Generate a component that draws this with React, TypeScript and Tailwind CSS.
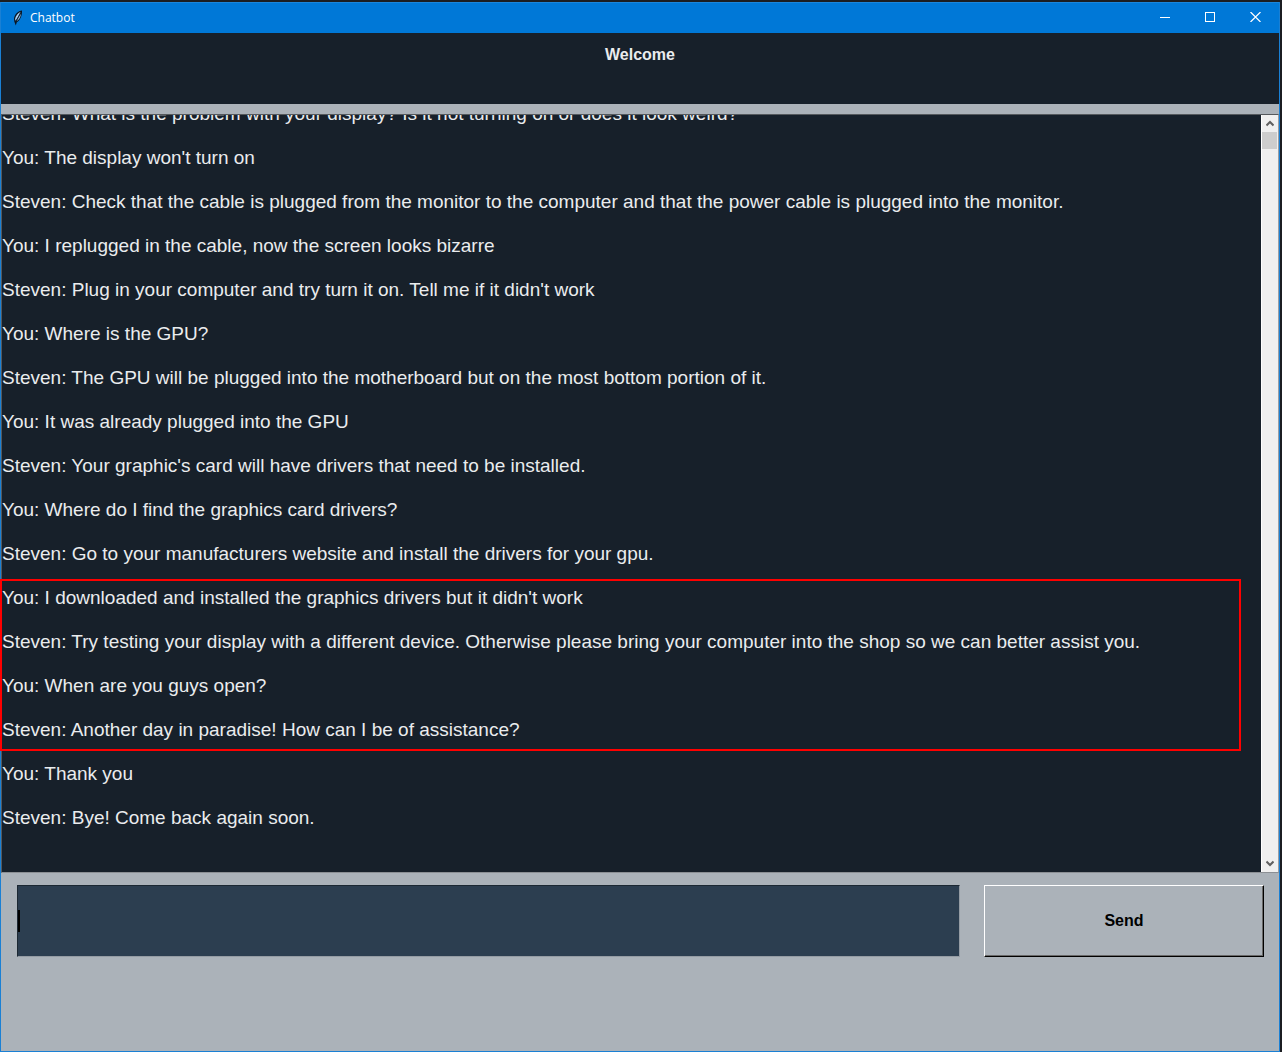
import { useState } from "react";

const beforeHighlight = [
  "Steven: What is the problem with your display? Is it not turning on or does it look weird?",
  "You: The display won't turn on",
  "Steven: Check that the cable is plugged from the monitor to the computer and that the power cable is plugged into the monitor.",
  "You: I replugged in the cable, now the screen looks bizarre",
  "Steven: Plug in your computer and try turn it on. Tell me if it didn't work",
  "You: Where is the GPU?",
  "Steven: The GPU will be plugged into the motherboard but on the most bottom portion of it.",
  "You: It was already plugged into the GPU",
  "Steven: Your graphic's card will have drivers that need to be installed.",
  "You: Where do I find the graphics card drivers?",
  "Steven: Go to your manufacturers website and install the drivers for your gpu.",
];
const highlighted = [
  "You: I downloaded and installed the graphics drivers but it didn't work",
  "Steven: Try testing your display with a different device. Otherwise please bring your computer into the shop so we can better assist you.",
  "You: When are you guys open?",
  "Steven: Another day in paradise! How can I be of assistance?",
];
const afterHighlight = ["You: Thank you", "Steven: Bye! Come back again soon."];

function Messages({ items }: { items: string[] }) {
  return (
    <>
      {items.map((text) => (
        <p key={text} className="shrink-0">
          {text}
        </p>
      ))}
    </>
  );
}

function Feather() {
  return (
    <svg viewBox="0 0 16 16" className="size-4" aria-hidden="true">
      <path d="M13 0.500C9.500 0.800 5.600 4 5 8.500L5.300 11.500 6.800 15.500 7.800 12.200C11 10.500 13.200 6 13 0.500Z" fill="#0a1420" />
      <path d="M11.800 1.800C8.800 3 6.600 6 6.100 9L6.500 10.800 9.200 6.500Z" fill="#a9d0f2" />
      <path d="M11.900 3.500 7.500 11.300C10 9.800 11.900 7 11.900 3.500Z" fill="#8ab6dd" />
      <path d="M11.800 2 6.700 12" stroke="#15263a" strokeWidth="0.600" fill="none" />
    </svg>
  );
}

function TitleBar() {
  return (
    <div className="flex h-[31px] shrink-0 items-center border-t border-[#1a86dc] bg-[#0078d7] text-white">
      <div className="flex flex-1 items-center gap-[5px] pl-2">
        <Feather />
        <span className="font-['Open_Sans',sans-serif] text-xs">Chatbot</span>
      </div>
      <div className="flex h-full pb-0.5">
        <button aria-label="Minimize" className="flex h-full w-[45px] items-center justify-center">
          <svg width="10" height="10" shapeRendering="crispEdges"><path d="M0 5.500H10" stroke="white" /></svg>
        </button>
        <button aria-label="Maximize" className="flex h-full w-[45px] items-center justify-center">
          <svg width="10" height="10" shapeRendering="crispEdges"><path d="M.5.5H9.500V9.500H.5Z" stroke="white" fill="none" /></svg>
        </button>
        <button aria-label="Close" className="flex h-full w-[47px] items-center justify-center">
          <svg width="11" height="10"><path d="M.5 0 10.500 10M10.500 0 .5 10" stroke="white" strokeWidth="1.200" /></svg>
        </button>
      </div>
    </div>
  );
}

function Scrollbar() {
  return (
    <div className="flex w-[17px] shrink-0 flex-col border-l border-white bg-[#f0f0f0]">
      <button aria-label="Scroll up" className="flex h-[17px] items-center justify-center">
        <svg width="8" height="7"><path d="M.5 5.500 4 2 7.500 5.500" stroke="#606060" strokeWidth="2" fill="none" /></svg>
      </button>
      <div className="h-[17px] w-[15px] bg-[#cdcdcd]" />
      <div className="flex-1" />
      <button aria-label="Scroll down" className="flex h-[17px] items-center justify-center">
        <svg width="8" height="7"><path d="M.5 1.500 4 5 7.500 1.500" stroke="#606060" strokeWidth="2" fill="none" /></svg>
      </button>
    </div>
  );
}

export default function App() {
  const [message, setMessage] = useState("");
  return (
    <div className="h-screen bg-[#1b1d21] pt-[2px] pr-[2px] font-['Liberation_Sans',Arial,sans-serif]">
      <div className="flex h-full flex-col border-x border-b border-[#1a80d4] bg-[#abb2b9]">
        <TitleBar />
        <header className="h-[71px] shrink-0 bg-[#17202a] pt-3 text-center">
          <h1 className="text-base leading-5 font-bold text-[#eaecee]">Welcome</h1>
        </header>
        <div className="h-[10px] shrink-0" />
        <main className="flex min-h-0 flex-1 border border-t-[#55595d] border-r-[#9a9fa5] border-b-[#8b8f94] border-l-[#55595d]">
          <div className="flex min-w-0 flex-1 flex-col justify-end gap-[22px] overflow-y-clip bg-[#17202a] pb-[43px] text-[19px] leading-[22px] text-[#eaecee]">
            <Messages items={beforeHighlight} />
            <section className="relative flex shrink-0 flex-col gap-[22px]">
              <Messages items={highlighted} />
              <div className="pointer-events-none absolute -top-2 right-5 -bottom-2.5 -left-0.5 border-2 border-[#ff0000]" />
            </section>
            <Messages items={afterHighlight} />
          </div>
          <Scrollbar />
        </main>
        <form
          className="flex h-[178px] shrink-0 items-start gap-6 pt-3 pr-[15px] pl-4"
          onSubmit={(event) => event.preventDefault()}
        >
          <div className="relative flex-1">
            <input
              type="text"
              aria-label="Message"
              value={message}
              onChange={(event) => setMessage(event.target.value)}
              className="block h-[72px] w-full border border-t-[#1c2833] border-r-[#959ca4] border-b-[#959ca4] border-l-[#1c2833] bg-[#2c3e50] text-[19px] text-[#eaecee] outline-none"
            />
            <span className="pointer-events-none absolute top-[25px] left-px h-[22px] w-0.5 bg-black" />
          </div>
          <button
            type="submit"
            className="h-[72px] w-[280px] border border-t-white border-r-black border-b-black border-l-white text-base font-bold text-black shadow-[inset_-1px_-1px_0_#696969]"
          >
            Send
          </button>
        </form>
      </div>
    </div>
  );
}
